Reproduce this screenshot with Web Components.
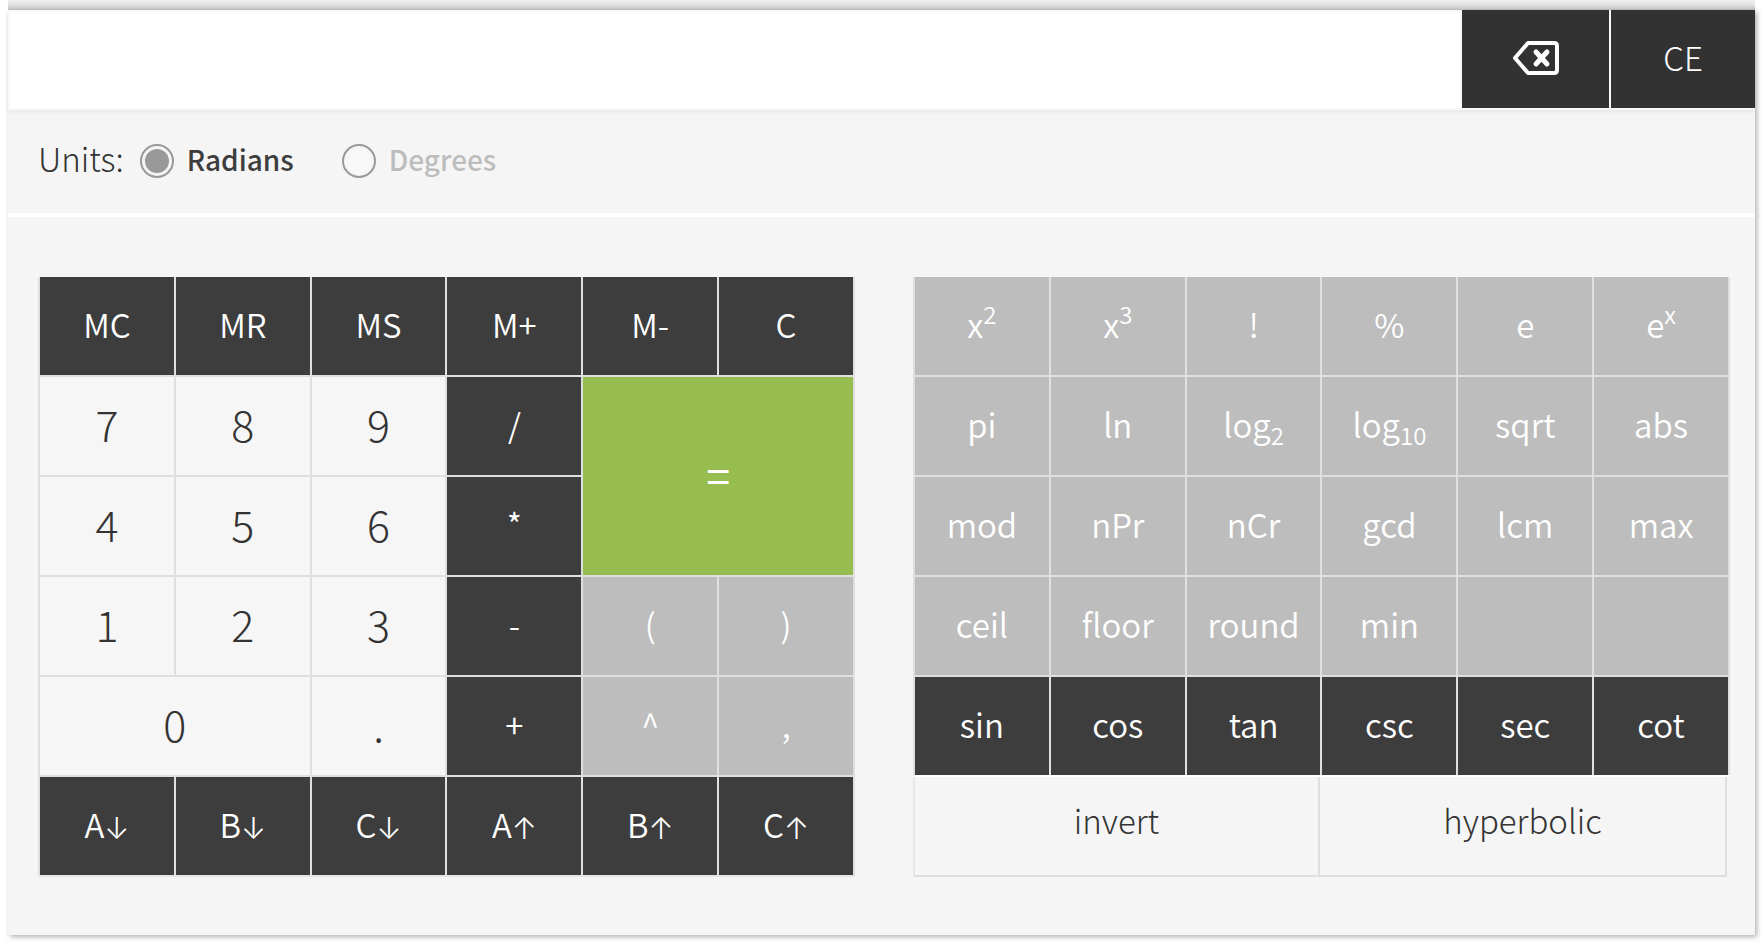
<!DOCTYPE html>
<html lang="en">
<head>
<meta charset="utf-8">
<meta name="viewport" content="width=device-width, initial-scale=1">
<title>Scientific calculator</title>
<style>
  body {
    margin: 0;
    background: #fff;
    color: #333;
    font-family: "Noto Sans CJK SC", "Noto Sans", sans-serif;
    font-weight: 300;
    font-size: 33px;
  }
</style>
</head>
<body>
<calc-app>
  <calc-display slot="display"></calc-display>
  <calc-units slot="units"></calc-units>

  <calc-pad slot="basic">
    <calc-key tone="dark">MC</calc-key>
    <calc-key tone="dark">MR</calc-key>
    <calc-key tone="dark">MS</calc-key>
    <calc-key tone="dark">M+</calc-key>
    <calc-key tone="dark">M-</calc-key>
    <calc-key tone="dark">C</calc-key>

    <calc-key tone="light">7</calc-key>
    <calc-key tone="light">8</calc-key>
    <calc-key tone="light">9</calc-key>
    <calc-key tone="dark">/</calc-key>
    <calc-key tone="green" wide tall>=</calc-key>

    <calc-key tone="light">4</calc-key>
    <calc-key tone="light">5</calc-key>
    <calc-key tone="light">6</calc-key>
    <calc-key tone="dark">*</calc-key>

    <calc-key tone="light">1</calc-key>
    <calc-key tone="light">2</calc-key>
    <calc-key tone="light">3</calc-key>
    <calc-key tone="dark">-</calc-key>
    <calc-key tone="grey">(</calc-key>
    <calc-key tone="grey">)</calc-key>

    <calc-key tone="light" wide>0</calc-key>
    <calc-key tone="light">.</calc-key>
    <calc-key tone="dark">+</calc-key>
    <calc-key tone="grey">^</calc-key>
    <calc-key tone="grey">,</calc-key>

    <calc-key tone="dark">A<i>↓</i></calc-key>
    <calc-key tone="dark">B<i>↓</i></calc-key>
    <calc-key tone="dark">C<i>↓</i></calc-key>
    <calc-key tone="dark">A<i>↑</i></calc-key>
    <calc-key tone="dark">B<i>↑</i></calc-key>
    <calc-key tone="dark">C<i>↑</i></calc-key>
  </calc-pad>

  <calc-pad slot="functions">
    <calc-key tone="grey">x<sup>2</sup></calc-key>
    <calc-key tone="grey">x<sup>3</sup></calc-key>
    <calc-key tone="grey">!</calc-key>
    <calc-key tone="grey">%</calc-key>
    <calc-key tone="grey">e</calc-key>
    <calc-key tone="grey">e<sup>x</sup></calc-key>

    <calc-key tone="grey">pi</calc-key>
    <calc-key tone="grey">ln</calc-key>
    <calc-key tone="grey">log<sub>2</sub></calc-key>
    <calc-key tone="grey">log<sub>10</sub></calc-key>
    <calc-key tone="grey">sqrt</calc-key>
    <calc-key tone="grey">abs</calc-key>

    <calc-key tone="grey">mod</calc-key>
    <calc-key tone="grey">nPr</calc-key>
    <calc-key tone="grey">nCr</calc-key>
    <calc-key tone="grey">gcd</calc-key>
    <calc-key tone="grey">lcm</calc-key>
    <calc-key tone="grey">max</calc-key>

    <calc-key tone="grey">ceil</calc-key>
    <calc-key tone="grey">floor</calc-key>
    <calc-key tone="grey">round</calc-key>
    <calc-key tone="grey">min</calc-key>
    <calc-key tone="grey" blank></calc-key>
    <calc-key tone="grey" blank></calc-key>

    <calc-key tone="dark">sin</calc-key>
    <calc-key tone="dark">cos</calc-key>
    <calc-key tone="dark">tan</calc-key>
    <calc-key tone="dark">csc</calc-key>
    <calc-key tone="dark">sec</calc-key>
    <calc-key tone="dark">cot</calc-key>

    <calc-modes slot="footer"></calc-modes>
  </calc-pad>
</calc-app>

<script>
  function define(name, html, setup) {
    const template = document.createElement('template');
    template.innerHTML = html;
    customElements.define(name, class extends HTMLElement {
      constructor() {
        super();
        this.attachShadow({ mode: 'open' }).append(template.content.cloneNode(true));
      }
      connectedCallback() {
        if (setup) setup(this);
      }
    });
  }

  define('calc-app', `
    <style>
      :host { display: block; }
      .shade {
        height: 10px;
        margin: 0 7px 0 8px;
        background: linear-gradient(#f0f0f0, #e2e2e2 50%, #c4c4c4);
      }
      main {
        margin: 0 7px 7px 8px;
        background: #f5f5f5;
        box-shadow: 2px 2px 5px rgba(0, 0, 0, .3);
      }
      .pads {
        display: grid;
        grid-template-columns: 1fr 1fr;
        align-items: start;
        gap: 58px;
        padding: 60px 25px 58px 30px;
        border-top: 4px solid #fff;
      }
    </style>
    <div class="shade"></div>
    <main>
      <slot name="display"></slot>
      <slot name="units"></slot>
      <div class="pads">
        <slot name="basic"></slot>
        <slot name="functions"></slot>
      </div>
    </main>`);

  define('calc-display', `
    <style>
      :host {
        display: flex;
        gap: 2px;
        height: 98px;
        padding-bottom: 2px;
        background: #f8f8f8;
        box-shadow: 0 2px 4px rgba(0, 0, 0, .06);
      }
      input {
        flex: 1;
        min-width: 0;
        margin: 0;
        padding: 0 20px;
        border: 2px solid #f8f8f8;
        border-right: 0;
        border-bottom: 0;
        background: #fff;
        font: inherit;
        color: inherit;
        outline: none;
      }
      button {
        display: flex;
        align-items: center;
        justify-content: center;
        width: 147px;
        margin: 0;
        padding: 0 0 4px;
        border: 0;
        background: #323232;
        color: #fff;
        font: inherit;
      }
      button:last-child { width: 144px; }
      button.erase { padding-bottom: 2px; }
      svg { display: block; }
    </style>
    <input type="text" aria-label="Expression">
    <button class="erase" type="button" aria-label="Backspace">
      <svg width="46" height="34" viewBox="0 0 46 34" fill="none" stroke="#fff" stroke-width="4" stroke-linecap="round" stroke-linejoin="round">
        <path d="M15 2H41Q44 2 44 5V29Q44 32 41 32H15L2 17Z"/>
        <path stroke-width="5" d="M23 11L34 23M34 11L23 23"/>
      </svg>
    </button>
    <button type="button">CE</button>`);

  define('calc-units', `
    <style>
      :host { display: block; }
      fieldset {
        display: flex;
        align-items: center;
        box-sizing: border-box;
        height: 103px;
        margin: 0;
        padding: 0 30px 2px;
        border: 0;
      }
      .title { padding-bottom: 6px; margin-right: 16px; }
      label {
        display: flex;
        align-items: center;
        gap: 13px;
        margin-right: 48px;
        color: #bdbdbd;
        font-size: 28px;
        font-weight: 500;
        line-height: 34px;
      }
      label:has(:checked) { color: #3d3d3d; }
      label span { padding-bottom: 4px; }
      input {
        appearance: none;
        box-sizing: border-box;
        width: 34px;
        height: 34px;
        margin: 0;
        padding: 3px;
        border: 2px solid #999;
        border-radius: 50%;
        background: #f8f8f8 content-box;
      }
      input:checked { background-color: #999; }
    </style>
    <fieldset aria-labelledby="title">
      <span class="title" id="title">Units:</span>
      <label><input type="radio" name="units" value="radians" checked><span>Radians</span></label>
      <label><input type="radio" name="units" value="degrees"><span>Degrees</span></label>
    </fieldset>`);

  define('calc-pad', `
    <style>
      :host { display: block; min-width: 0; }
      .keys {
        display: grid;
        grid-template-columns: repeat(6, minmax(0, 1fr));
        grid-auto-rows: 98px;
        gap: 2px;
        padding: 0 2px;
        background: #dfdfdf;
        border-bottom: 2px solid #e6e6e6;
      }
      .keys.joined { border-bottom: 2px solid #fff; }
    </style>
    <div class="keys"><slot></slot></div>
    <slot name="footer"></slot>`,
    host => {
      const footer = host.querySelector('[slot="footer"]');
      host.shadowRoot.querySelector('.keys').classList.toggle('joined', Boolean(footer));
    });

  define('calc-key', `
    <style>
      :host { display: grid; min-width: 0; }
      :host([wide]) { grid-column: span 2; }
      :host([tall]) { grid-row: span 2; }
      button {
        min-width: 0;
        margin: 0;
        padding: 0 0 4px;
        border: 0;
        border-radius: 0;
        background: #3d3d3d;
        color: #fff;
        font: inherit;
        font-weight: 350;
        white-space: nowrap;
      }
      :host([tone="grey"]) button { background: #bdbdbd; }
      :host([tone="green"]) button { background: #97bc50; font-size: 43px; font-weight: 400; }
      :host([tone="light"]) button {
        padding-bottom: 6px;
        background: #f6f6f6;
        color: #333;
        font-size: 43px;
        font-weight: 300;
      }
      ::slotted(sup), ::slotted(sub) { font-size: 24px; line-height: 0; }
      ::slotted(sup) { vertical-align: 14px; }
      ::slotted(sub) { vertical-align: -7px; }
      ::slotted(i) {
        font-family: Inter, sans-serif;
        font-style: normal;
        font-size: 30px;
        line-height: 0;
        vertical-align: -1px;
      }
    </style>
    <button type="button"><slot></slot></button>`,
    host => { host.shadowRoot.querySelector('button').disabled = host.hasAttribute('blank'); });

  define('calc-modes', `
    <style>
      :host {
        display: grid;
        grid-template-columns: 1fr 1fr;
        margin-right: 3px;
      }
      button {
        height: 100px;
        margin: 0;
        padding: 0 0 12px;
        border: solid #dfdfdf;
        border-width: 0 2px 2px 0;
        background: #f5f5f5;
        color: #333;
        font: inherit;
      }
      button:first-of-type { border-left: 2px solid #e6e6e6; }
    </style>
    <button type="button" aria-pressed="false">invert</button>
    <button type="button" aria-pressed="false">hyperbolic</button>`);
</script>
</body>
</html>
